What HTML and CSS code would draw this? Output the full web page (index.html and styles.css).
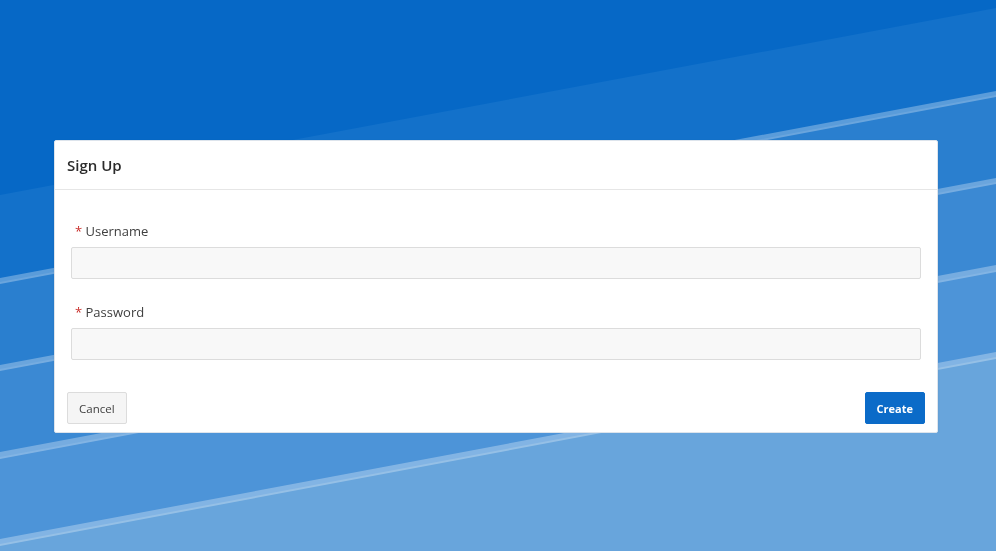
FILE: index.html
```html
<!DOCTYPE html>
<html lang="en">
<head>
  <meta charset="UTF-8">
  <title>Sign Up</title>
  <link rel="stylesheet" href="styles.css">
</head>
<body>

<svg class="backdrop" viewBox="0 0 996 551" preserveAspectRatio="none" aria-hidden="true">
  <rect width="996" height="551" fill="#0668c6"/>
  <polygon points="0,195 996,8 996,551 0,551" fill="#1371ca"/>
  <polygon points="0,282 996,95 996,551 0,551" fill="#2a7fcf"/>
  <polygon points="0,369 996,182 996,551 0,551" fill="#3b89d3"/>
  <polygon points="0,457 996,270 996,551 0,551" fill="#4d94d8"/>
  <polygon points="0,544 996,357 996,551 0,551" fill="#68a5dc"/>
  <g fill="#ffffff" fill-opacity="0.3">
    <polygon points="0,278 996,91 996,97 0,284"/>
    <polygon points="0,365 996,178 996,184 0,371"/>
    <polygon points="0,452 996,265 996,272 0,459"/>
    <polygon points="0,539 996,352 996,359 0,546"/>
  </g>
</svg>

<main class="page">
  <div class="dialog">
    <div class="dialog-header">Sign Up</div>
    <form class="dialog-body">
      <div class="field">
        <label for="username"><span class="req">*</span> Username</label>
        <input type="text" id="username" name="username">
      </div>
      <div class="field">
        <label for="password"><span class="req">*</span> Password</label>
        <input type="password" id="password" name="password">
      </div>
    </form>
    <div class="dialog-footer">
      <button type="button" class="btn">Cancel</button>
      <button type="button" class="btn btn-primary">Create</button>
    </div>
  </div>
</main>

</body>
</html>
```

FILE: styles.css
```css
body {
  margin: 0;
  padding: 0;
  font-family: 'Open Sans', 'Noto Sans', sans-serif;
  color: #404040;
  overflow: hidden;
}
.backdrop {
  position: fixed;
  left: 0;
  top: 0;
  width: 100%;
  height: 100%;
  z-index: -1;
}
.page {
  padding: 140px 58px 0 54px;
}
.dialog {
  background: #fff;
  border: 1px solid #dde4ec;
  border-radius: 2px;
  box-shadow: 0 1px 3px rgba(0, 0, 0, 0.08);
}
.dialog-header {
  height: 48px;
  display: flex;
  align-items: center;
  padding: 0 12px;
  border-bottom: 1px solid #e6e6e6;
  font-size: 15px;
  font-weight: 600;
  color: #2b2b2b;
}
.dialog-body {
  padding: 8px 16px 0;
  margin: 0;
}
.field {
  padding-top: 23px;
}
label {
  display: block;
  height: 20px;
  line-height: 20px;
  margin-bottom: 6px;
  padding-left: 4px;
  font-size: 13px;
  color: #404040;
}
.req {
  color: #c9302c;
}
input {
  display: block;
  box-sizing: border-box;
  width: 100%;
  height: 32px;
  margin: 0;
  padding: 4px 8px;
  background: #f8f8f8;
  border: 1px solid #dcdcdc;
  border-radius: 2px;
  font-family: inherit;
  font-size: 13px;
  outline: none;
}
.dialog-footer {
  display: flex;
  justify-content: space-between;
  padding: 32px 12px 8px;
}
.btn {
  height: 32px;
  padding: 0 11px;
  background: #f5f5f5;
  border: 1px solid #dcdcdc;
  border-radius: 2px;
  font-family: inherit;
  font-size: 11.5px;
  color: #404040;
  cursor: pointer;
}
.btn-primary {
  padding: 0 11px;
  background: #0b6bc8;
  border-color: #0b6bc8;
  color: #fff;
  font-size: 11px;
  font-weight: 700;
}
```
